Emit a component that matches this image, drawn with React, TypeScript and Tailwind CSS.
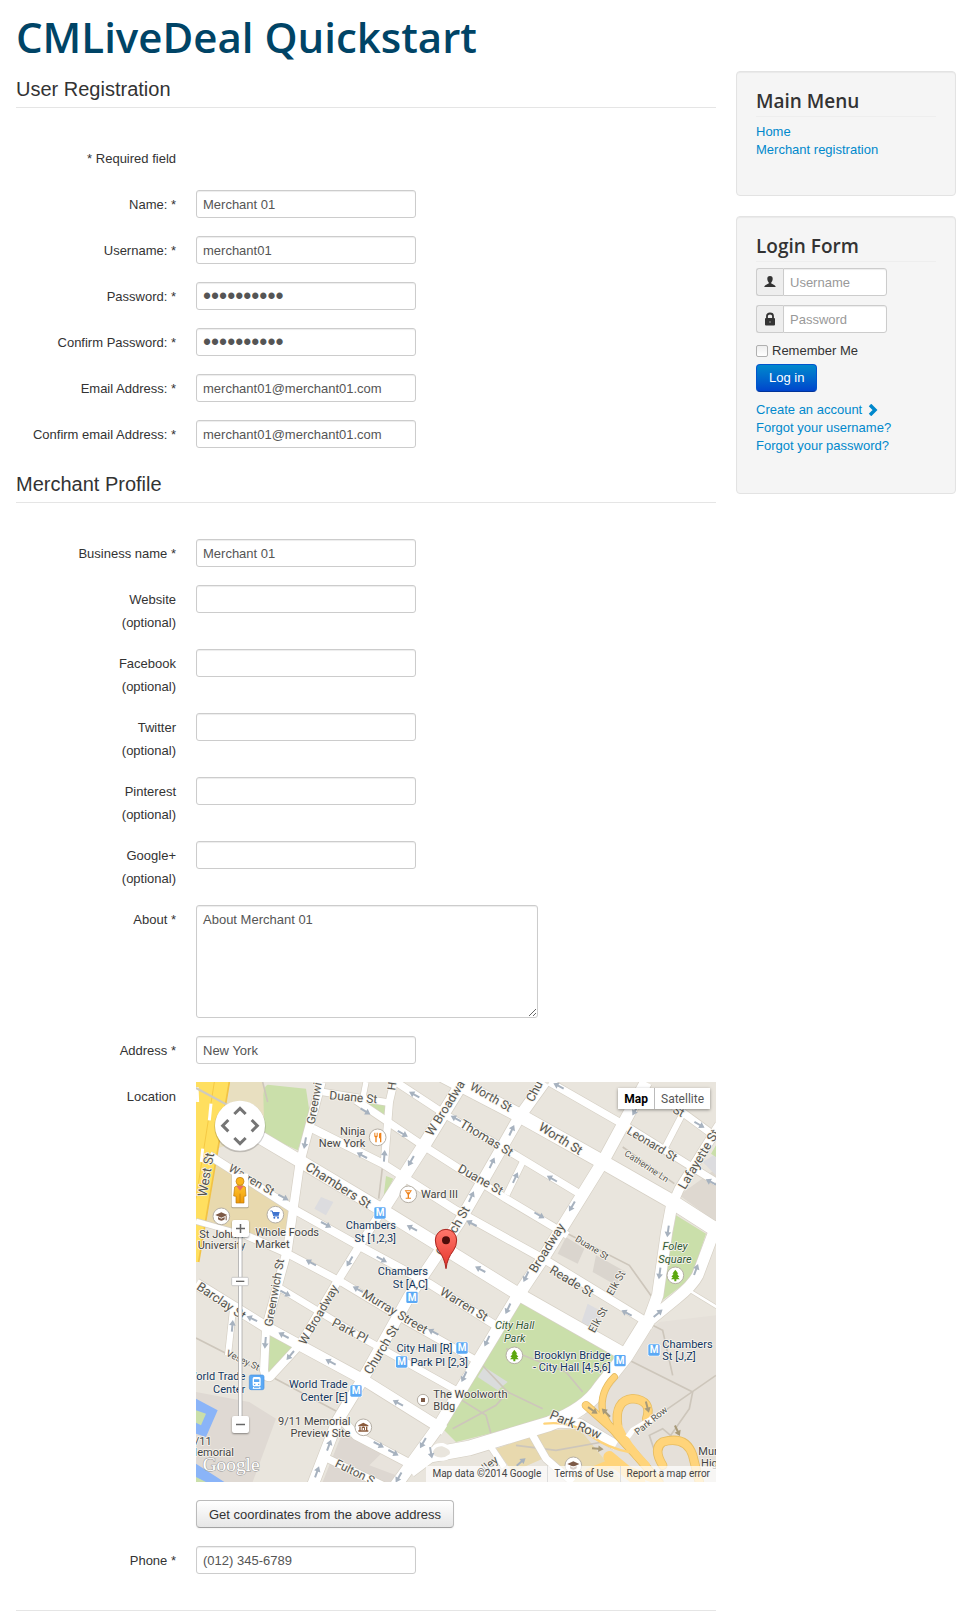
import React from 'react';

const INPUT =
  "block h-7 rounded-[3px] border border-[#cccccc] bg-white px-1.5 leading-[18px] text-[#555555] shadow-[inset_0_1px_1px_rgba(0,0,0,0.075)] outline-none placeholder:text-[#999999]";

function Row({ label, id, note, children }: { label: string; id?: string; note?: string; children?: React.ReactNode }) {
  return (
    <div className="mb-[18px] flex gap-5">
      <label htmlFor={id} className="w-40 shrink-0 pt-1.5 text-right leading-[18px]">
        {label}
        {note && <span className="-mb-px mt-[5px] block">{note}</span>}
      </label>
      <div className="min-h-7 min-w-0 flex-1">{children}</div>
    </div>
  );
}

function Field({ label, id, type = 'text', value = '', note }: { label: string; id: string; type?: string; value?: string; note?: string }) {
  return (
    <Row label={label} id={id} note={note}>
      <input
        id={id}
        type={type}
        defaultValue={value}
        className={type === 'password' ? `${INPUT} w-[220px] text-[23px]` : `${INPUT} w-[220px] text-[13px]`}
      />
    </Row>
  );
}

function Legend({ children }: { children: React.ReactNode }) {
  return <h2 className="mb-9 border-b border-[#e5e5e5] text-[20px] leading-9">{children}</h2>;
}

type Road = [string, number];

const ROADS: Road[] = [
  ['M380 30L580 62', 20],
  ['M510 0L500 50', 16],
  ['M594 0L580 60L565 245', 22],
  ['M480 55L680 190L930 350L1115 460', 22],
  ['M600 0L760 105L960 220L1150 335', 22],
  ['M980 240L932 338', 18],
  ['M350 140L560 245L780 385L1050 535L1340 712', 24],
  ['M40 220L290 380L490 492L700 605L895 728', 24],
  ['M150 460L275 515L440 602L640 722L840 835', 22],
  ['M0 418L150 460L275 515', 16],
  ['M235 608L500 768L790 930', 20],
  ['M1060 0L1290 132L1560 300', 22],
  ['M1390 40L1560 165', 22],
  ['M1460 95L1408 195', 18],
  ['M1570 130L1450 320L1430 365', 28],
  ['M112 672L96 820', 18],
  ['M376 0L312 240L275 500L210 740', 26],
  ['M440 1015L480 1060L660 1155', 26],
  ['M385 1125L560 1210', 22],
  ['M800 0L690 180L555 390', 38],
  ['M555 390L490 492L420 605L310 790L222 885Q208 890 204 865L210 740', 24],
  ['M0 605L210 735L500 892L745 1045', 32],
  ['M1045 0L970 105L790 420L640 642L500 892L425 1015L350 1210', 34],
  ['M1350 0L1220 240L1050 515L960 650L830 865L730 1030L600 1210', 36],
  ['M740 -20L970 100L1220 240L1430 360L1570 450', 42],
  ['M190 165L330 248L560 385L965 635L1290 820', 38],
  ['M1430 355L1412 450L1385 640L1350 735', 34],
  ['M1565 420L1505 580Q1490 610 1440 650L1360 715', 34],
  ['M1355 715L1290 820L1215 915Q1170 985 1060 1025L820 1098L700 1120L640 1165', 44],
  ['M1010 1060L1050 1130L1130 1200', 22],
  ['M885 1095L925 1155', 18],
  ['M1050 1020L1150 1025L1260 1090', 30],
  ['M1480 625L1570 680', 8],
];

const PATHS = [
  'M1115 455L1300 550L1400 690', 'M0 768L200 870L430 992', 'M560 250L548 350', 'M1280 195L1435 305',
  'M1300 835L1490 930L1480 980L1410 1080', 'M1370 730L1400 745L1430 880', 'M1300 1060L1560 880',
  'M850 840L935 930L1040 980', 'M930 800L1110 870L1160 930', 'M790 950L870 1000L890 1075',
  'M770 1040L900 970L935 930', 'M960 1090L1080 1105L1220 1080', 'M200 0L215 60', 'M1400 1180L1360 1060L1400 1040L1470 1100',
];

const ARROWS: [number, number, number][] = [
  [655, 38, 208], [780, 110, 208], [508, 88, 32], [620, 155, 30], [498, 220, 208], [327, 183, 100], [565, 222, 274],
  [645, 237, 120], [947, 145, 295], [888, 243, 295], [826, 344, 295], [958, 287, 295], [1128, 373, 120], [1068, 290, 210],
  [262, 346, 28], [390, 428, 28], [345, 542, 208], [461, 538, 120], [557, 532, 28], [648, 438, 208], [827, 424, 208],
  [1030, 400, 30], [853, 562, 208], [486, 622, 208], [990, 584, 115], [936, 680, 115], [873, 777, 115], [804, 884, 115],
  [712, 750, 208], [268, 634, 28], [168, 710, 205], [263, 760, 208], [208, 782, 95], [109, 732, 275], [283, 820, 130],
  [404, 840, 208], [606, 963, 208], [548, 1088, 28], [592, 1112, 28], [681, 1083, 120], [608, 1186, 120], [399, 1090, 290],
  [363, 1170, 290], [1292, 693, 208], [1386, 694, 320], [1416, 448, 98], [1391, 574, 98], [1500, 563, 290],
  [1510, 128, 30], [1088, 12, 208], [1545, 300, 208], [1318, 85, 120], [1190, 985, 35], [1230, 992, 225], [1354, 975, 75],
  [1444, 1046, 65], [1205, 1100, 5], [705, 1112, 80], [975, 1140, 320],
];

type Street = [number, number, number, number, string];

const STREETS: Street[] = [
  [472, 46, 5, 36, 'Duane St'], [355, 64, -80, 35, 'Greenwi'], [588, 12, -82, 35, 'H'], [748, 78, -58, 37, 'W Broadwa'],
  [885, 45, 30, 36, 'Worth St'], [1015, 28, -62, 37, 'Chu'], [872, 168, 31, 37, 'Thomas St'], [1094, 170, 32, 38, 'Worth St'],
  [1368, 186, 31, 35, 'Leonard St'], [1448, 88, 28, 35, 'St'], [1352, 253, 33, 27, 'Catherine Ln'], [1508, 232, -59, 38, 'Lafayette St'],
  [167, 293, 30, 35, 'Warren St'], [427, 310, 32, 39, 'Chambers St'], [854, 293, 29, 37, 'Duane St'], [30, 278, -80, 39, 'West St'],
  [770, 447, -60, 38, 'Church St'], [1053, 498, -58, 38, 'Broadway'], [1188, 497, 32, 28, 'Duane St'], [1127, 598, 31, 37, 'Reade St'],
  [1260, 603, -60, 32, 'Elk St'], [1206, 713, -61, 33, 'Elk St'], [804, 667, 31, 37, 'Warren St'], [597, 689, 31, 37, 'Murray Street'],
  [462, 746, 28, 37, 'Park Pl'], [235, 632, -80, 35, 'Greenwich St'], [368, 698, -60, 36, 'W Broadway'], [76, 657, 34, 38, 'Barclay St'],
  [141, 835, 25, 28, 'Vesey St'], [556, 803, -59, 38, 'Church St'], [1139, 1028, 23, 39, 'Park Row'], [1365, 1016, -39, 28, 'Park Row'],
  [477, 1170, 26, 35, 'Fulton S'], [882, 1145, -39, 34, 'lley'],
];

type Place = [number, number, 'start' | 'middle' | 'end', string, string[], number];
const NAVY = '#12365e';
const DARK = '#444444';

const PLACES: Place[] = [
  [508, 159, 'end', DARK, ['Ninja', 'New York'], 36],
  [675, 347, 'start', DARK, ['Ward III'], 36],
  [10, 468, 'start', DARK, ['St John’s'], 36],
  [5, 502, 'start', DARK, ['University'], 36],
  [178, 461, 'start', DARK, ['Whole Foods', 'Market'], 37],
  [600, 440, 'end', NAVY, ['Chambers', 'St [1,2,3]'], 39],
  [696, 578, 'end', NAVY, ['Chambers', 'St [A,C]'], 39],
  [769, 810, 'end', NAVY, ['City Hall [R]'], 36],
  [816, 851, 'end', NAVY, ['Park Pl [2,3]'], 36],
  [1244, 830, 'end', NAVY, ['Brooklyn Bridge', '- City Hall [4,5,6]'], 36],
  [1399, 797, 'start', NAVY, ['Chambers', 'St [J,Z]'], 36],
  [455, 917, 'end', NAVY, ['World Trade', 'Center [E]'], 39],
  [148, 893, 'end', NAVY, ['World Trade', 'Center'], 39],
  [463, 1028, 'end', DARK, ['9/11 Memorial', 'Preview Site'], 36],
  [712, 948, 'start', DARK, ['The Woolworth', 'Bldg'], 36],
  [-4, 1088, 'start', DARK, ['/11'], 36],
  [114, 1122, 'end', DARK, ['Memorial'], 36],
  [1507, 1118, 'start', DARK, ['Mur', ' Hig'], 37],
];

function Metro({ x, y }: { x: number; y: number }) {
  return (
    <g transform={`translate(${x} ${y})`}>
      <rect x="-19" y="-19" width="38" height="38" rx="5" fill="#ffffff" />
      <rect x="-17" y="-17" width="34" height="34" rx="4" fill="#5ba9f5" />
      <text y="10" fontSize="30" fontWeight="700" fill="#ffffff" textAnchor="middle">M</text>
    </g>
  );
}

function Poi({ x, y, children }: { x: number; y: number; children: React.ReactNode }) {
  return (
    <g transform={`translate(${x} ${y})`}>
      <circle r="25" fill="#ffffff" stroke="#b5afa5" strokeWidth="3" />
      {children}
    </g>
  );
}

const TREE = 'M0 -17L9 -5H5L12 5H7L13 12H3V18H-3V12H-13L-7 5H-12L-5 -5H-9Z';

function MapDrawing() {
  return (
    <svg viewBox="0 0 1560 1200" preserveAspectRatio="xMidYMid slice" className="block h-full w-full font-[Roboto,sans-serif]" role="img" aria-label="Map of New York">
      <rect width="1560" height="1200" fill="#e9e5dd" />
      <path d="M100 0H200L215 60L190 160L60 200Z" fill="#e8dfc0" />
      <path d="M55 232L285 385L268 448L160 465L20 430Z" fill="#e8d9ae" />
      <path d="M0 930L160 960L240 1010L170 1200H0Z" fill="#dfd9d3" />
      <path d="M440 1050L640 1150L590 1200H380Z" fill="#ddd7d1" />
      <path d="M560 1110L630 1150L600 1180L520 1150Z" fill="#e8e3dc" />
      <path d="M1450 340L1560 260V420Z" fill="#ded8d0" />
      <path d="M1290 830L1390 720L1560 700V1200H1180L1120 1060L1220 930Z" fill="#e5e0d9" />
      <path d="M1110 465L1165 500L1145 545L1085 515Z M1200 520L1290 570L1260 610L1190 570Z" fill="#dad5ce" />
      <path d="M1175 665L1220 690L1190 745L1155 725Z M375 345L412 360L390 400L355 380Z M1520 240L1560 215V280Z" fill="#dcdcdf" />
      <path d="M930 1090L1060 1045L1150 1040L1280 1200H1130L1040 1120L1020 1070Z M900 1100L1000 1065L1040 1130L950 1170Z" fill="#e8d9ae" />
      <path d="M215 8L330 20L342 100L305 205L205 160L202 40Q203 12 215 8Z" fill="#cadfaa" />
      <path d="M500 55L570 70L565 110Z M570 282L592 290L562 350Z M1560 190L1545 215L1560 225Z" fill="#cadfaa" />
      <path d="M972 658L1275 830Q1230 950 1060 1010L780 1080L735 1035L850 850Z" fill="#cadfaa" />
      <path d="M865 855L935 900L905 925L845 885Z" fill="#dadcdc" />
      <path d="M1440 400L1530 455L1485 590L1392 660Z M215 755L292 795L215 875Z" fill="#cadfaa" />
      <path d="M0 950L65 985L30 1065L0 1055Z M0 1145L85 1200H0Z" fill="#8ab4f8" />
      <path d="M0 985L30 995L15 1030L0 1022Z M0 1185L30 1200H0Z" fill="#cadfaa" />

      <path d="M0 0H100L8 540H0Z" fill="#ffdf5f" />
      <path d="M100 0L8 540" stroke="#f2c344" strokeWidth="5" />
      <path d="M55 0L0 350" stroke="#f5c944" strokeWidth="3" fill="none" />
      <path d="M3 15L5 60M45 65L40 115M20 200L16 240" stroke="#ffffff" strokeWidth="9" />
      <path d="M0 18L100 72" stroke="#cfcabf" strokeWidth="6" />

      <g fill="none" stroke="#cdc6bb" strokeWidth="5">
        {PATHS.map((d) => <path key={d} d={d} />)}
      </g>
      <g fill="none" strokeLinejoin="round">
        {ROADS.map(([d, w]) => <path key={d} d={d} stroke="#d6d0c5" strokeWidth={w + 4} />)}
        {ROADS.map(([d, w]) => <path key={d} d={d} stroke="#ffffff" strokeWidth={w} />)}
      </g>
      <path d="M705 1110Q715 1085 740 1088Q775 1100 765 1120Q740 1140 712 1125Z" fill="#e9e5dd" stroke="#ffffff" strokeWidth="10" />

      <g fill="none" stroke="#e7bd62" strokeLinecap="round">
        <path d="M1255 885Q1210 930 1220 990Q1235 1040 1330 1130" strokeWidth="22" />
        <path d="M1170 970L1260 1050L1390 1200" strokeWidth="26" />
        <path d="M1265 1030Q1255 955 1310 950Q1370 955 1352 1010" strokeWidth="28" />
        <path d="M1400 1150Q1370 1100 1400 1080Q1470 1060 1490 1120L1510 1200" strokeWidth="28" />
      </g>
      <g fill="none" stroke="#ffd47a" strokeLinecap="round">
        <path d="M1255 885Q1210 930 1220 990Q1235 1040 1330 1130" strokeWidth="17" />
        <path d="M1170 970L1260 1050L1390 1200" strokeWidth="21" />
        <path d="M1265 1030Q1255 955 1310 950Q1370 955 1352 1010M1265 1030Q1290 1090 1350 1150" strokeWidth="23" />
        <path d="M1400 1150Q1370 1100 1400 1080Q1470 1060 1490 1120L1510 1200M1180 1170L1240 1145L1370 1190" strokeWidth="23" />
        <path d="M1045 1025Q1130 1015 1190 1065Q1240 1100 1300 1110" strokeWidth="7" />
        <path d="M1240 1125L1330 1200" strokeWidth="36" />
      </g>
      <path d="M1295 1065L1310 1045L1410 985" fill="none" stroke="#ffffff" strokeWidth="16" />

      {ARROWS.map(([x, y, r]) => (
        <path
          key={`${x}-${y}`}
          transform={`translate(${x} ${y}) rotate(${r})`}
          d="M-17 -3H2V-10L18 0L2 10V3H-17Z"
          fill={x > 1180 && y > 960 ? '#a89a78' : '#a7b2bf'}
        />
      ))}

      <g fill="#55554f" stroke="#f7f4ee" strokeWidth="5" strokeLinejoin="round" style={{ paintOrder: 'stroke' }} textAnchor="middle">
        {STREETS.map(([x, y, r, size, name]) => (
          <text key={`${x}-${y}`} transform={`translate(${x} ${y}) rotate(${r})`} y={size / 3} fontSize={size}>{name}</text>
        ))}
      </g>
      <g strokeWidth="5" stroke="#f7f4ee" strokeLinejoin="round" style={{ paintOrder: 'stroke' }} fontSize="33">
        {PLACES.map(([x, y, anchor, fill, lines, gap]) => (
          <text key={`${x}-${y}`} x={x} y={y} textAnchor={anchor} fill={fill}>
            {lines.map((line, i) => <tspan key={line} x={x} dy={i === 0 ? 0 : gap}>{line}</tspan>)}
          </text>
        ))}
        <g fill="#2f5a33" fontStyle="italic" textAnchor="middle">
          <text x="956" y="742">City Hall</text>
          <text x="956" y="779">Park</text>
          <text x="1437" y="503">Foley</text>
          <text x="1437" y="542">Square</text>
        </g>
      </g>

      <Metro x={552} y={393} />
      <Metro x={648} y={646} />
      <Metro x={798} y={798} />
      <Metro x={617} y={840} />
      <Metro x={1272} y={836} />
      <Metro x={1374} y={804} />
      <Metro x={480} y={927} />
      <g transform="translate(182 901)">
        <rect x="-22" y="-22" width="44" height="44" rx="5" fill="#5ba9f5" stroke="#4893e0" strokeWidth="2" />
        <path d="M-8 -16H8Q12 -16 12 -11V8Q12 12 8 12H-8Q-12 12 -12 8V-11Q-12 -16 -8 -16Z" fill="#ffffff" />
        <path d="M-8 -9H8V-1H-8Z M-8 4H-4V8H-8Z M4 4H8V8H4Z" fill="#5ba9f5" />
        <path d="M-11 18H11M-8 13L-11 18M8 13L11 18" stroke="#ffffff" strokeWidth="3" />
      </g>

      <Poi x={545} y={166}>
        <path d="M-10 -14V-4Q-10 0 -7 0V15H-3V0Q0 0 0 -4V-14H-2V-5H-4V-14H-6V-5H-8V-14Z M4 -10Q4 -14 11 -14V15H7V3H4Z" fill="#ee8118" />
      </Poi>
      <Poi x={637} y={337}>
        <path d="M-11 -12H11L2 1V10H8V13H-8V10H-2V1Z M-6 -9L-4 -6H4L6 -9Z" fill="#ee8118" fillRule="evenodd" />
      </Poi>
      <Poi x={76} y={403}>
        <path d="M-18 -4L0 -12L18 -4L0 4Z M-10 2L0 7L10 2V9Q0 17 -10 9Z M13 -1H16V12H13Z" fill="#7d5a47" />
      </Poi>
      <Poi x={238} y={398}>
        <path d="M-15 -11H-9L-5 4H10" fill="none" stroke="#3f74cf" strokeWidth="3" />
        <path d="M-9 -8H13L10 3H-5Z" fill="#3f74cf" />
        <circle cx="-3" cy="9" r="3" fill="#3f74cf" />
        <circle cx="8" cy="9" r="3" fill="#3f74cf" />
      </Poi>
      <Poi x={502} y={1036}>
        <path d="M-15 -6L0 -14L15 -6V-3H-15Z M-12 -2H-8V9H-12Z M8 -2H12V9H8Z M-15 9H15V13H-15Z M-5 8V0Q0 -5 5 0V8H2V2H-2V8Z" fill="#8a5b3c" />
      </Poi>
      <Poi x={1132} y={1150}>
        <path d="M-18 -4L0 -12L18 -4L0 4Z M-10 2L0 7L10 2V9Q0 17 -10 9Z" fill="#7d5a47" />
      </Poi>
      <g transform="translate(681 954)">
        <circle r="17" fill="#ffffff" stroke="#b5afa5" strokeWidth="3" />
        <rect x="-6" y="-6" width="12" height="12" fill="#7d5a47" />
      </g>
      <Poi x={955} y={820}><path d={TREE} fill="#5ca70f" /></Poi>
      <Poi x={1438} y={580}><path d={TREE} fill="#5ca70f" /></Poi>

      <defs>
        <linearGradient id="pin" x1="0" y1="0" x2="0" y2="1">
          <stop offset="0" stopColor="#ff776b" />
          <stop offset="1" stopColor="#e4342b" />
        </linearGradient>
        <linearGradient id="man" x1="0" y1="0" x2="0" y2="1">
          <stop offset="0" stopColor="#fdc32c" />
          <stop offset="1" stopColor="#f09a08" />
        </linearGradient>
      </defs>
      <path d="M750 560Q746 528 728 506Q718 492 718 474A32 32 0 0 1 782 474Q782 492 772 506Q754 528 750 560Z" fill="url(#pin)" stroke="#a8231d" strokeWidth="3" />
      <circle cx="750" cy="475" r="12" fill="#4d0d0a" />

      <circle cx="132" cy="134" r="77" fill="#000000" opacity="0.18" />
      <circle cx="132" cy="131" r="75" fill="#ffffff" />
      <g fill="none" stroke="#757575" strokeWidth="9">
        <path d="M115 96L132 79L149 96" />
        <path d="M115 168L132 185L149 168" />
        <path d="M97 114L80 131L97 148" />
        <path d="M167 114L184 131L167 148" />
      </g>

      <rect x="106" y="276" width="52" height="103" rx="5" fill="#000000" opacity="0.25" />
      <rect x="107" y="275" width="50" height="101" rx="4" fill="#ffffff" />
      <path d="M116 315Q132 304 148 315L150 342L144 343V363H120V343L113 342Z" fill="url(#man)" stroke="#b9770b" strokeWidth="2" />
      <path d="M132 335V362" stroke="#b9770b" strokeWidth="2" />
      <path d="M121 312H143L132 326Z" fill="#ec6b63" />
      <circle cx="132" cy="298" r="12" fill="#fbb51c" stroke="#b9770b" strokeWidth="2" />

      <rect x="127" y="460" width="11" height="545" fill="#ffffff" stroke="#9b9b9b" strokeWidth="2" />
      <rect x="107" y="586" width="50" height="25" rx="3" fill="#ffffff" stroke="#b5b5b5" strokeWidth="2" />
      <path d="M120 598H145" stroke="#666666" strokeWidth="4" />

      <text x="20" y="1168" fontSize="58" fill="#ffffff" stroke="#9a9a9a" strokeWidth="3" style={{ paintOrder: 'stroke' }} className="font-['Liberation_Serif',serif]">Google</text>
    </svg>
  );
}

const ZOOM_BTN = 'absolute left-9 flex size-[17px] items-center justify-center rounded-[2px] bg-white shadow-[0_1px_2px_rgba(0,0,0,0.4)]';

function LocationMap() {
  return (
    <div className="relative h-[400px] overflow-hidden font-[Roboto,sans-serif]">
      <MapDrawing />
      <button type="button" aria-label="Zoom in" className={`${ZOOM_BTN} top-[138px]`}>
        <svg viewBox="0 0 9 9" className="size-[9px]"><path d="M0 4.5H9M4.5 0V9" stroke="#666666" strokeWidth="1.5" /></svg>
      </button>
      <button type="button" aria-label="Zoom out" className={`${ZOOM_BTN} top-[334px]`}>
        <svg viewBox="0 0 9 9" className="size-[9px]"><path d="M0 4.5H9" stroke="#666666" strokeWidth="1.5" /></svg>
      </button>
      <div className="absolute top-1.5 right-1.5 flex h-[21px] bg-white text-[12px] shadow-[0_1px_3px_rgba(0,0,0,0.4)]">
        <button type="button" className="border-r border-[#bbbbbb] px-1.5 pt-px font-bold text-black">Map</button>
        <button type="button" className="px-1.5 pt-px text-[#565656]">Satellite</button>
      </div>
      <div className="absolute right-0 bottom-0 flex h-4 items-center bg-white/70 text-[10px] leading-4 text-[#444444]">
        <span className="px-1.5">Map data ©2014 Google</span>
        <a href="#terms" className="border-l border-[#dddddd] px-1.5">Terms of Use</a>
        <a href="#report" className="border-l border-[#dddddd] px-1.5">Report a map error</a>
      </div>
    </div>
  );
}

function Well({ title, children }: { title: string; children: React.ReactNode }) {
  return (
    <section className="mb-5 rounded-[4px] border border-[#e3e3e3] bg-[#f5f5f5] px-[19px] py-5 shadow-[inset_0_1px_1px_rgba(0,0,0,0.05)]">
      <h3 className="mb-1.5 border-b border-[#eeeeee] pb-1.5 font-['Open_Sans',sans-serif] text-[19px] leading-[18px] font-semibold">{title}</h3>
      {children}
    </section>
  );
}

const ADDON = 'flex w-[27px] shrink-0 items-center justify-center rounded-l-[3px] border border-r-0 border-[#cccccc] bg-[#eeeeee]';
const LINK = 'text-[#0088cc]';

export default function App() {
  return (
    <div className="min-h-screen bg-white pr-3 pl-4 font-['Liberation_Sans',Arial,sans-serif] text-[13px] leading-[18px] text-[#333333]">
      <header className="pt-[9px] pb-1.5">
        <h1 className="font-['Open_Sans',sans-serif] text-[42px] leading-[56px] font-semibold text-[#004466]">CMLiveDeal Quickstart</h1>
      </header>
      <div className="flex items-start gap-5">
        <main className="min-w-0 flex-1">
          <form className="border-b border-[#e5e5e5]">
            <Legend>User Registration</Legend>
            <div className="mb-[18px] flex h-7"><p className="w-40 pt-1.5 text-right">* Required field</p></div>
            <Field label="Name: *" id="name" value="Merchant 01" />
            <Field label="Username: *" id="username" value="merchant01" />
            <Field label="Password: *" id="password" type="password" value="merchant01" />
            <Field label="Confirm Password: *" id="password2" type="password" value="merchant01" />
            <Field label="Email Address: *" id="email" type="email" value="merchant01@merchant01.com" />
            <Field label="Confirm email Address: *" id="email2" type="email" value="merchant01@merchant01.com" />

            <Legend>Merchant Profile</Legend>
            <Field label="Business name *" id="business" value="Merchant 01" />
            <Field label="Website" note="(optional)" id="website" />
            <Field label="Facebook" note="(optional)" id="facebook" />
            <Field label="Twitter" note="(optional)" id="twitter" />
            <Field label="Pinterest" note="(optional)" id="pinterest" />
            <Field label="Google+" note="(optional)" id="google" />
            <Row label="About *" id="about">
              <textarea
                id="about"
                defaultValue="About Merchant 01"
                className="block h-[113px] w-[342px] rounded-[3px] border border-[#cccccc] bg-white px-1.5 py-[5px] text-[#555555] shadow-[inset_0_1px_1px_rgba(0,0,0,0.075)] outline-none"
              />
            </Row>
            <Field label="Address *" id="address" value="New York" />
            <Row label="Location"><LocationMap /></Row>
            <Row label="">
              <button type="button" className="h-7 rounded-[4px] border border-[#bbbbbb] border-b-[#a2a2a2] bg-linear-to-b from-white to-[#e6e6e6] px-3 pt-px shadow-[0_1px_2px_rgba(0,0,0,0.05)]">
                Get coordinates from the above address
              </button>
            </Row>
            <div className="pb-[18px]"><Field label="Phone *" id="phone" type="tel" value="(012) 345-6789" /></div>
          </form>
        </main>

        <aside className="w-[220px] shrink-0">
          <Well title="Main Menu">
            <ul className="mb-4">
              <li><a href="#home" className={LINK}>Home</a></li>
              <li><a href="#merchant" className={LINK}>Merchant registration</a></li>
            </ul>
          </Well>
          <Well title="Login Form">
            <form>
              <div className="mb-[9px] flex">
                <label htmlFor="login-user" aria-label="Username" className={ADDON}>
                  <svg viewBox="0 0 12 12" className="size-3"><path d="M6 0C7.900 0 8.800 1.200 8.700 3C8.600 4.500 8 5.700 7.300 6.300V7.500C8.500 8.300 11.500 8.800 11.700 11H.3C.5 8.800 3.500 8.300 4.700 7.500V6.300C4 5.700 3.400 4.500 3.300 3C3.200 1.200 4.100 0 6 0Z" fill="#333333" /></svg>
                </label>
                <input id="login-user" placeholder="Username" className={`${INPUT} w-[104px] rounded-l-none text-[13px]`} />
              </div>
              <div className="mb-[9px] flex">
                <label htmlFor="login-pass" aria-label="Password" className={ADDON}>
                  <svg viewBox="0 0 12 14" className="h-3.5 w-3"><path d="M3 6V4Q3 1.500 6 1.500Q9 1.500 9 4V6" fill="none" stroke="#333333" strokeWidth="1.800" /><rect x="1" y="6" width="10" height="7.500" rx="1" fill="#333333" /><path d="M6 9V11" stroke="#999999" /></svg>
                </label>
                <input id="login-pass" type="password" placeholder="Password" className={`${INPUT} w-[104px] rounded-l-none text-[13px]`} />
              </div>
              <div className="mb-1 flex h-[18px] items-center gap-1">
                <input id="remember" type="checkbox" className="size-3 appearance-none rounded-[2px] border border-[#b0b0b0] bg-linear-to-b from-[#eeeeee] to-white" />
                <label htmlFor="remember">Remember Me</label>
              </div>
              <button type="button" className="mb-[9px] block h-7 rounded-[4px] border border-[#0055cc] border-b-[#003399] bg-linear-to-b from-[#0088cc] to-[#0044cc] px-3 text-white">
                Log in
              </button>
              <ul className="mb-[18px]">
                <li>
                  <a href="#create" className={`${LINK} flex items-center gap-1.5`}>
                    Create an account
                    <svg viewBox="0 0 10 12" className="h-3 w-2.5"><path d="M2 1L7 6L2 11" fill="none" stroke="#0088cc" strokeWidth="3.500" /></svg>
                  </a>
                </li>
                <li><a href="#user" className={LINK}>Forgot your username?</a></li>
                <li><a href="#pass" className={LINK}>Forgot your password?</a></li>
              </ul>
            </form>
          </Well>
        </aside>
      </div>
    </div>
  );
}
